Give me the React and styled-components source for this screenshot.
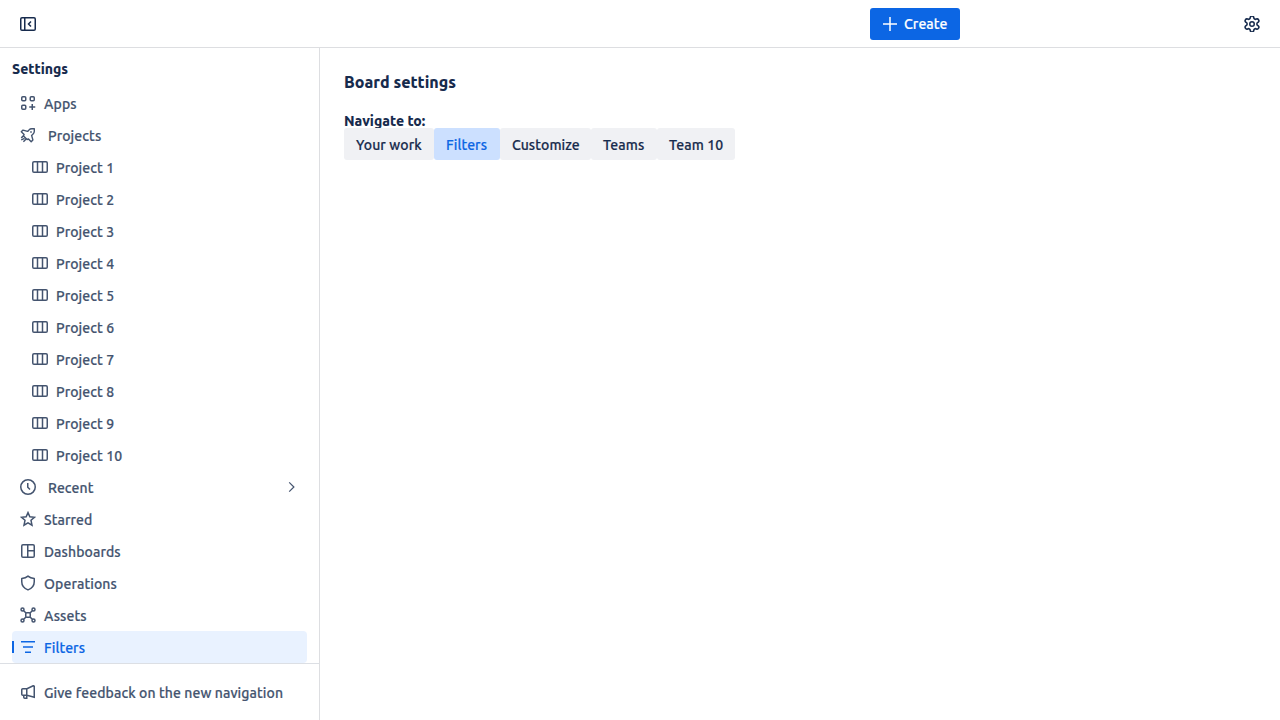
import React from 'react';
import styled, { createGlobalStyle } from 'styled-components';

const GlobalStyle = createGlobalStyle`
  * { box-sizing: border-box; }
  body {
    margin: 0;
    background: #fff;
    color: #172b4d;
    font: 500 14px/20px Ubuntu, "Noto Sans", sans-serif;
    letter-spacing: 0.1px;
    -webkit-text-stroke: 0.2px;
  }
  button {
    font: inherit;
    letter-spacing: inherit;
    border: 0;
    padding: 0;
    background: none;
  }
`;

const Page = styled.div`
  height: 100vh;
  display: flex;
  flex-direction: column;
  overflow: hidden;
`;

const TopBar = styled.header`
  height: 48px;
  flex: none;
  display: grid;
  grid-template-columns: 320px 1fr 320px;
  align-items: center;
  padding: 0 12px;
  border-bottom: 1px solid #dddee1;
`;

const IconButton = styled.button`
  width: 32px;
  height: 32px;
  display: grid;
  place-items: center;
  color: #172b4d;
  ${(p) => p.$end && 'justify-self: end;'}
`;

const CreateButton = styled.button`
  grid-column: 2;
  justify-self: end;
  margin-right: -12px;
  width: 90px;
  height: 32px;
  display: flex;
  align-items: center;
  gap: 6px;
  padding-left: 12px;
  border-radius: 3px;
  background: #0c66e4;
  color: #fff;
`;

const Body = styled.div`
  flex: 1;
  display: flex;
  min-height: 0;
`;

const Sidebar = styled.nav`
  width: 320px;
  flex: none;
  display: flex;
  flex-direction: column;
  border-right: 1px solid #dddee1;
`;

const NavList = styled.div`
  height: 615px;
  padding: 11px 12px 0;
`;

const heading = `
  font-weight: 800;
  letter-spacing: 0;
  -webkit-text-stroke: 0;
`;

const NavHeading = styled.h2`
  margin: 0 0 8px;
  font-size: 14px;
  line-height: 20px;
  ${heading}
`;

const NavItem = styled.a`
  height: 32px;
  display: flex;
  align-items: center;
  gap: ${(p) => (p.$wide ? 12 : 8)}px;
  padding: 0 7px 0 ${(p) => (p.$nested ? 20 : 8)}px;
  border-radius: 4px;
  color: ${(p) => (p.$selected ? '#0c66e4' : '#44546f')};
  background: ${(p) => (p.$selected ? '#e9f2ff' : 'transparent')};
  ${(p) =>
    p.$selected &&
    `
    padding-left: 0;
    &::before {
      content: '';
      width: 2px;
      height: 12px;
      margin-right: -2px;
      background: #0c66e4;
    }
  `}
`;

const Label = styled.span`
  flex: 1;
  padding-top: 2px;
  white-space: nowrap;
`;

const NavFooter = styled.div`
  flex: 1;
  padding: 12px 12px 0;
  border-top: 1px solid #dcdfe4;
`;

const Main = styled.main`
  flex: 1;
  padding: 24px;
`;

const Title = styled.h1`
  margin: 0;
  font-size: 16px;
  line-height: 20px;
  ${heading}
`;

const GroupLabel = styled.h3`
  margin: 19px 0 0;
  font-size: 14px;
  line-height: 20px;
  height: 17px;
  ${heading}
`;

const ButtonGroup = styled.div`
  display: flex;
`;

const GroupButton = styled.button`
  width: ${(p) => p.$width}px;
  height: 32px;
  padding: 1px 0 0 12px;
  text-align: left;
  white-space: nowrap;
  border-radius: 3px;
  color: ${(p) => (p.$selected ? '#0c66e4' : '#172b4d')};
  background: ${(p) => (p.$selected ? '#cce0ff' : '#f0f1f4')};
`;

const Svg = styled.svg`
  flex: none;
  display: block;
  fill: none;
  stroke: currentColor;
  stroke-width: ${(p) => p.$stroke || 1.5};
`;

const Icon = ({ children, ...rest }) => (
  <Svg width="16" height="16" viewBox="0 0 16 16" {...rest}>{children}</Svg>
);

const icons = {
  collapse: (
    <Icon>
      <rect x="0.75" y="1.75" width="14.5" height="12.5" rx="1.25" />
      <path d="M4.75 2v12M11 5.5 8.5 8 11 10.5" />
    </Icon>
  ),
  plus: <Icon><path d="M8 1v14M1 8h14" /></Icon>,
  gear: (
    <Icon>
      <path d="M6.35 2.2a1.66 1.66 0 0 1 3.3 0 1.66 1.66 0 0 0 2.36 1.36 1.66 1.66 0 0 1 1.65 2.87 1.66 1.66 0 0 0 0 3.14 1.66 1.66 0 0 1-1.65 2.87 1.66 1.66 0 0 0-2.36 1.36 1.66 1.66 0 0 1-3.3 0 1.66 1.66 0 0 0-2.36-1.36 1.66 1.66 0 0 1-1.65-2.87 1.66 1.66 0 0 0 0-3.14 1.66 1.66 0 0 1 1.65-2.87 1.66 1.66 0 0 0 2.36-1.36Z" transform="translate(8 8) scale(1.07 1.1) translate(-8 -8)" />
      <circle cx="8" cy="8" r="2.25" />
    </Icon>
  ),
  apps: (
    <Icon>
      <rect x="1.75" y="1.75" width="4" height="4" rx="1" />
      <rect x="10.25" y="1.75" width="4" height="4" rx="1" />
      <rect x="1.75" y="10.25" width="4" height="4" rx="1" />
      <path d="M12.25 9v6M9.25 12h6" />
    </Icon>
  ),
  rocket: (
    <Icon $stroke={1.4} strokeLinejoin="round">
      <path d="M14.3 1.7h-2.5c-1.1 0-2.1.4-2.8 1.2L7.6 4.4 3 3.1 1.3 4.8l2.8 2.7-.6 1.4 3.6 3.6 1.4-.6 2.7 2.8 1.7-1.7-1.3-4.6 1.5-1.4c.8-.7 1.2-1.7 1.2-2.8Z" />
      <path d="M4.6 11.4 1.2 12.9M3.4 14.7l2.7-2.8M1.2 10.9 3.5 8.9" />
      <circle cx="11" cy="5" r="0.5" strokeWidth="1" />
    </Icon>
  ),
  board: (
    <Icon>
      <rect x="0.75" y="2.75" width="14.5" height="10.5" rx="1.25" />
      <path d="M5.5 3v10M10.5 3v10" />
    </Icon>
  ),
  clock: <Icon><circle cx="8" cy="8" r="7.25" /><path d="M7.75 4v4.2L10 10.5" /></Icon>,
  star: (
    <Icon>
      <path d="m8 1.6 1.85 4.2 4.6.5-3.45 3 1 4.9L8 11.8l-4 2.4 1-4.9-3.45-3 4.6-.5Z" />
    </Icon>
  ),
  dashboard: (
    <Icon>
      <rect x="1.75" y="1.75" width="12.5" height="12.5" rx="1.25" />
      <path d="M7.75 2v12M8 7.75h6" />
    </Icon>
  ),
  shield: (
    <Icon strokeLinejoin="round">
      <path d="M8 1.1c1.6 1.4 3.6 2.2 6.25 2.5v3.1c0 3.8-2.2 6.6-6.25 8.2-4.05-1.6-6.25-4.4-6.25-8.2V3.6C4.4 3.3 6.4 2.5 8 1.1Z" />
    </Icon>
  ),
  assets: (
    <Icon>
      <rect x="5.75" y="5.75" width="4.5" height="4.5" rx="1" />
      <path d="M3.7 3.7 6 6M12.3 3.7 10 6M3.7 12.3 6 10M12.3 12.3 10 10" />
      <circle cx="2.5" cy="2.5" r="1.5" />
      <circle cx="13.5" cy="2.5" r="1.5" />
      <circle cx="2.5" cy="13.5" r="1.5" />
      <circle cx="13.5" cy="13.5" r="1.5" />
    </Icon>
  ),
  filter: <Icon><path d="M1 2.75h14M3 8h10M5 13.25h6" /></Icon>,
  megaphone: (
    <Icon>
      <path d="M14.25 2v11.2L7 11.25H2.75a1 1 0 0 1-1-1v-4.5a1 1 0 0 1 1-1H7L13.2 1.8a.8.8 0 0 1 1.05.7ZM6.75 4.75v9.5h-2a1 1 0 0 1-1-1v-2" />
    </Icon>
  ),
  chevron: <Icon $stroke={1.2}><path d="m5.2 3.3 4.7 4.7-4.7 4.7" /></Icon>,
};

const navItems = [
  { label: 'Apps', icon: 'apps' },
  { label: 'Projects', icon: 'rocket', wide: true },
  ...Array.from({ length: 10 }, (_, i) => ({ label: `Project ${i + 1}`, icon: 'board', nested: true })),
  { label: 'Recent', icon: 'clock', wide: true, expandable: true },
  { label: 'Starred', icon: 'star' },
  { label: 'Dashboards', icon: 'dashboard' },
  { label: 'Operations', icon: 'shield' },
  { label: 'Assets', icon: 'assets' },
  { label: 'Filters', icon: 'filter', selected: true },
];

const destinations = [
  { label: 'Your work', width: 90 },
  { label: 'Filters', width: 66, selected: true },
  { label: 'Customize', width: 91 },
  { label: 'Teams', width: 66 },
  { label: 'Team 10', width: 78 },
];

export default function App() {
  return (
    <Page>
      <GlobalStyle />
      <TopBar>
        <IconButton aria-label="Collapse sidebar">{icons.collapse}</IconButton>
        <CreateButton>{icons.plus}<span>Create</span></CreateButton>
        <IconButton $end aria-label="Settings">{icons.gear}</IconButton>
      </TopBar>
      <Body>
        <Sidebar>
          <NavList>
            <NavHeading>Settings</NavHeading>
            {navItems.map((item) => (
              <NavItem key={item.label} $wide={item.wide} $nested={item.nested} $selected={item.selected}>
                {icons[item.icon]}
                <Label>{item.label}</Label>
                {item.expandable && icons.chevron}
              </NavItem>
            ))}
          </NavList>
          <NavFooter>
            <NavItem>
              {icons.megaphone}
              <Label>Give feedback on the new navigation</Label>
            </NavItem>
          </NavFooter>
        </Sidebar>
        <Main>
          <Title>Board settings</Title>
          <GroupLabel>Navigate to:</GroupLabel>
          <ButtonGroup>
            {destinations.map((d) => (
              <GroupButton key={d.label} $width={d.width} $selected={d.selected}>
                {d.label}
              </GroupButton>
            ))}
          </ButtonGroup>
        </Main>
      </Body>
    </Page>
  );
}
